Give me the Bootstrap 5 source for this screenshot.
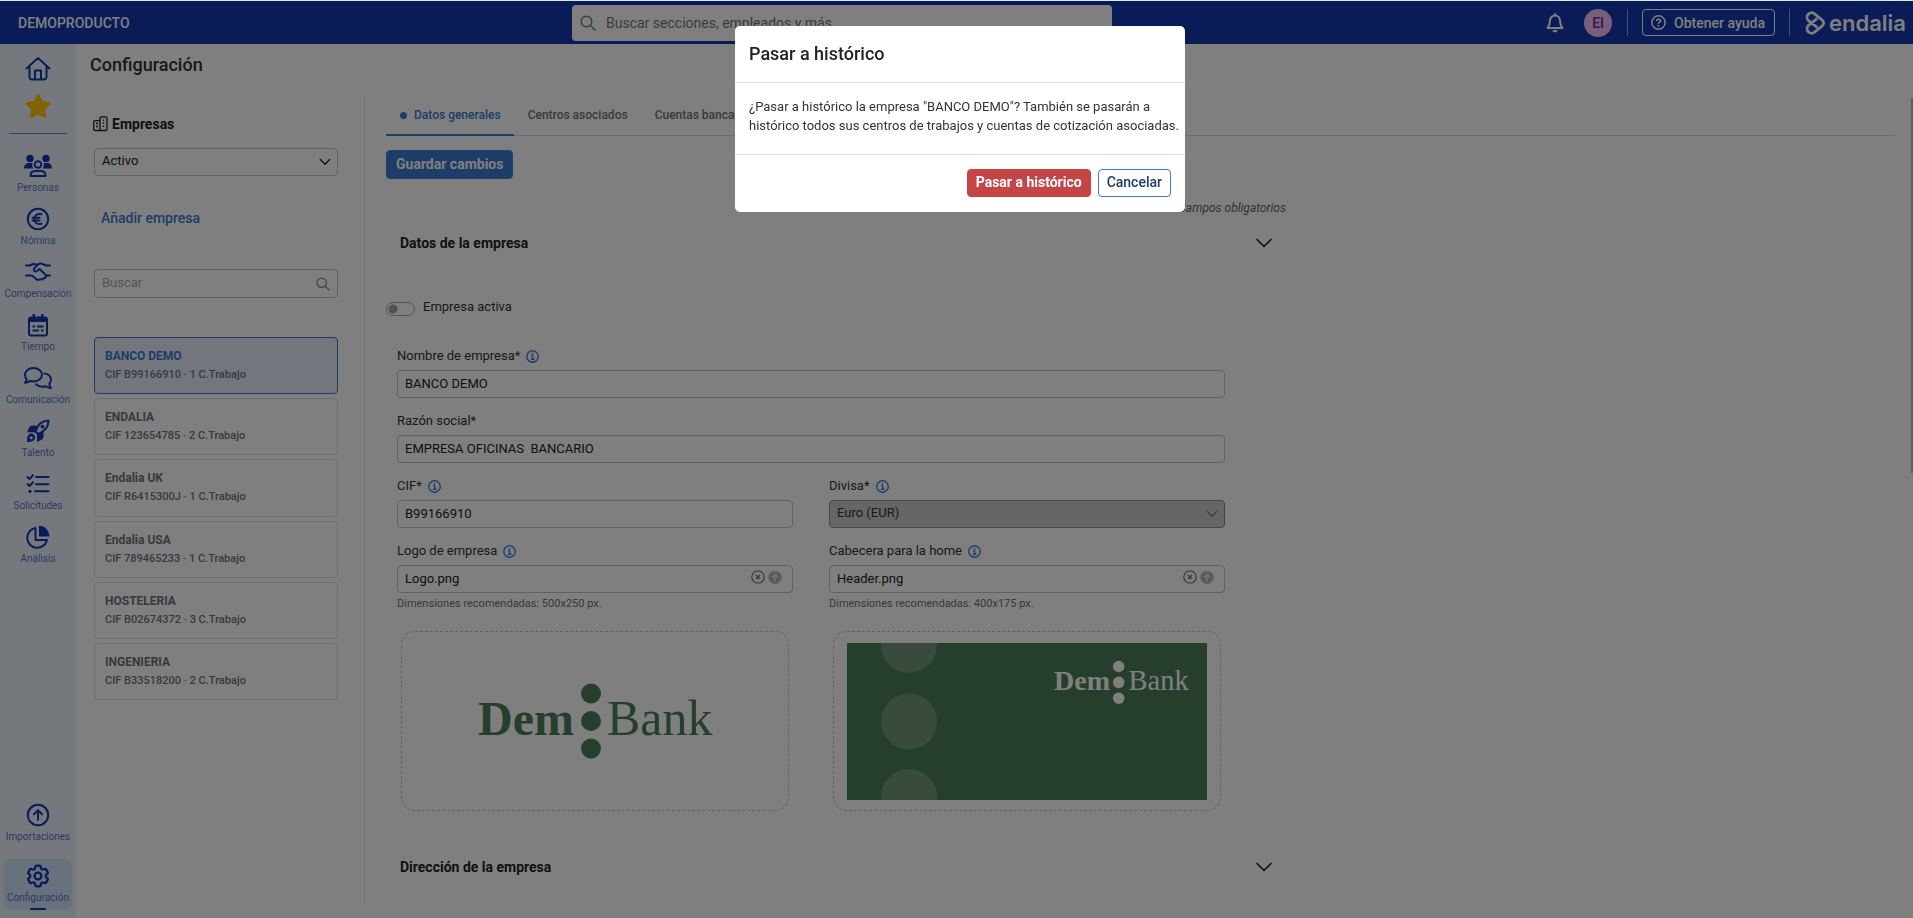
<!DOCTYPE html>
<html lang="es">
<head>
<meta charset="utf-8">
<meta name="viewport" content="width=device-width, initial-scale=1">
<title>Configuración - Empresas</title>
<link rel="stylesheet" href="https://cdn.jsdelivr.net/npm/bootstrap@5.3.0/dist/css/bootstrap.min.css">
<style>
:root{--navy:#1238b0;--blue:#3a7bd0;--ink:#333;--line:#bfc3c6;--muted:#6c757d}
body{font-family:Roboto,"Liberation Sans",sans-serif;font-size:13px;line-height:18px;color:var(--ink);border-top:1px solid #dde8e8;overflow:hidden}
svg{display:block;flex:none}
.stroke-icon{fill:none;stroke:currentColor;stroke-width:2;stroke-linecap:round;stroke-linejoin:round}
.logo-mark{fill:none;stroke:currentColor;stroke-width:2.800;stroke-linecap:round;stroke-linejoin:round}
.topbar{display:grid;grid-template-columns:554px minmax(0,540px) 1fr;height:43px;padding:0 7px 0 18px;background:var(--navy);color:#fff}
.brand-name{font-size:14px;font-weight:500}
.global-search{height:36px;background:#fff;border-radius:4px;padding-left:8px;gap:10px;color:#777}
.global-search input{border:0;outline:0;padding:0;background:none;font-size:14px;color:var(--ink);flex:1}
.global-search input::placeholder{color:#777}
.avatar{width:28px;height:28px;background:#f0c0f8;color:#78209a;font-size:14px;font-weight:500}
.sep{width:1px;height:27px;background:#8ea2dc}
.sep-user{margin:0 14px 0 15px}
.sep-logo{margin:0 15px 0 14px}
.btn-help{height:27px;padding:0 9px 0 8px;gap:8px;border:1px solid #fff;border-radius:4px;color:#fff;font-size:14px;font-weight:500;line-height:20px}
.logo-text{font-family:Inter,sans-serif;font-weight:600;font-size:22px;line-height:24px}
.rail{width:76px;background:#ebf2fc;color:var(--navy);padding:12px 4px 8px}
.rail a{color:var(--navy);text-decoration:none;font-size:10px;line-height:16px}
.rail a span{color:#5578c8}
.rail-item{height:53px;padding-top:5px;gap:2px}
.rail-item.current{height:51px;background:#d3e4f9;border-radius:7px}
.rail-item.current::after{content:"";width:16px;height:2px;background:var(--navy);border-radius:1px}
.rail hr{width:58px;margin:15px auto;border-color:#5b86d8;opacity:1}
.page-title{font-size:18px;font-weight:500;line-height:22px;margin:0;padding:10px 14px 19px}
.companies{width:289px;border-right:1px solid #ebedee;padding:19px 26px 0 17px;margin-bottom:12px}
.companies h2,.section-head{font-size:14px;font-weight:700;line-height:20px;color:#222}
.form-control,.form-select{font-size:13px;line-height:18px;height:28px;padding:3px 8px 5px 7px;border:1px solid var(--line);border-radius:4px;color:#222}
.form-select{padding-top:2px;padding-right:28px;background-image:url("data:image/svg+xml,%3Csvg xmlns='http://www.w3.org/2000/svg' viewBox='0 0 16 16'%3E%3Cpath fill='none' stroke='%23222' stroke-width='1.6' stroke-linecap='round' stroke-linejoin='round' d='M2.5 5l5.5 5.5L13.500 5'/%3E%3C/svg%3E");background-size:14px;background-position:right 5px center}
.form-select:disabled{background-color:#ccc;border-color:#8c8f92;opacity:1;color:#333;-webkit-text-fill-color:#333;background-image:url("data:image/svg+xml,%3Csvg xmlns='http://www.w3.org/2000/svg' viewBox='0 0 16 16'%3E%3Cpath fill='none' stroke='%237a7d80' stroke-width='1.6' stroke-linecap='round' stroke-linejoin='round' d='M2.5 5l5.5 5.5L13.500 5'/%3E%3C/svg%3E")}
.form-control::placeholder{color:#a9adb0}
.filter-state{margin:14px 0 0 1px;width:244px}
.add-link{font-size:14px;font-weight:500;line-height:28px;color:var(--blue);padding:0 8px;border:0;background:none;margin-top:28px}
.company-search{margin:37px 0 39px 1px}
.company-search .form-control{height:29px}
.company-list{display:grid;grid-auto-rows:1fr;gap:4px;height:363px;margin-left:1px}
.company-item{border:1px solid #dcdee0;border-radius:4px;padding:9px 10px 0;text-decoration:none;color:var(--muted);font-size:11px;font-weight:500;line-height:18px}
.company-item strong{display:block;font-size:12px;font-weight:700;line-height:19px}
.company-item.current{background:#e6eefa;border-color:var(--blue)}
.company-item.current strong{color:var(--blue)}
.detail{padding:0 16px 0 21px}
.nav-tabs{--bs-nav-tabs-border-color:#d8dadc}
.nav-tabs .nav-link{border:0;border-bottom:2px solid transparent;border-radius:0;height:41px;padding:11px 13px 10px 14px;gap:7px;font-size:12px;font-weight:500;line-height:18px;color:var(--muted)}
.nav-tabs .nav-link.active{color:var(--blue);border-bottom-color:var(--blue);background:none}
.dot{width:7px;height:7px;border-radius:50%;background:currentColor}
.btn-main{--bs-btn-color:#fff;--bs-btn-bg:#3a7bd0;--bs-btn-border-color:#4a86d4;height:29px;padding:0 9px 2px;font-size:14px;font-weight:700;line-height:20px;border-radius:4px;margin-top:14px}
.form-area{max-width:900px}
.required-note{font-size:12px;font-style:italic;color:#666;margin-top:20px}
.section-head{height:24px;padding:0 14px;border:0;background:none;line-height:24px;margin-top:14px}
.fields+.section-head{margin-top:44px}
.active-row{margin-top:43px;gap:8px;height:18px}
.active-row label{line-height:17px}
.form-check-input.toggle{width:29px;height:14px;margin:4px 0 0;border:1px solid #a4a6a8;border-radius:7px;background-image:radial-gradient(circle,#a4a4a4 4px,transparent 5px);background-size:14px 14px;background-position:-1px center;background-repeat:no-repeat}
.fields{margin-top:31px;padding:0 61px 0 11px;display:grid;grid-template-columns:1fr 1fr;gap:14px 36px}
.field-wide{grid-column:span 2}
.field-label{gap:6px;height:18px;margin-bottom:5px}
.field-label svg{color:#3a7be0}
.file-icons{position:absolute;right:11px;top:5px;gap:3px;color:#7a7f84}
.file-icons button{border:0;background:none;padding:0;color:inherit}
.hint{font-size:11px;line-height:18px;color:var(--muted);margin-top:2px}
.preview{height:180px;margin:18px 4px 0;border:1px dashed #c3c5c7;border-radius:14px}
.preview text{font-family:"Liberation Serif",serif}
.thumb{width:2px;height:375px;margin-top:54px;background:#bcbcbc}
.modal-backdrop{top:1px}
.modal{padding-left:7px}
.modal-dialog{max-width:450px;margin:26px auto 0}
.modal-content{border:0;border-radius:5px;color:var(--ink)}
.modal-header{padding:16px 14px 17px}
.modal-title{font-size:18px;font-weight:500;line-height:23px;color:#222}
.modal-body{padding:14px 3px 19px 14px;line-height:19px}
.modal-footer{padding:14px 14px 15px;gap:7px}
.modal-footer>*{margin:0}
.modal .btn{height:28px;padding:0 8px 2px;font-size:14px;line-height:20px;border-radius:4px}
.btn-archive{--bs-btn-color:#fff;--bs-btn-bg:#c54546;--bs-btn-border-color:#c54546;font-weight:700}
.btn-cancel{--bs-btn-color:#1d3b63;--bs-btn-bg:#fff;--bs-btn-border-color:#3a7bd5;font-weight:500}
</style>
</head>
<body class="vh-100 d-flex flex-column">
<svg width="0" height="0" class="position-absolute" aria-hidden="true">
  <symbol id="i-info" viewBox="0 0 16 16"><circle cx="8" cy="8" r="7.100" fill="none" stroke="currentColor" stroke-width="1.700"/><path fill="none" stroke="currentColor" stroke-width="1.600" d="M6.200 7.200h2v4M6 11.400h4.400"/><circle cx="8" cy="4.700" r="1.100" fill="currentColor"/></symbol>
  <symbol id="i-search" viewBox="0 0 16 16"><path fill="none" stroke="currentColor" stroke-width="1.400" stroke-linecap="round" d="M6.500 1.200a5.300 5.300 0 1 0 0 10.600a5.300 5.300 0 1 0 0-10.600M10.400 10.400l4.600 4.600"/></symbol>
  <symbol id="i-down" viewBox="0 0 16 10"><path fill="none" stroke="currentColor" stroke-width="1.700" stroke-linecap="round" stroke-linejoin="round" d="M1 1.500l7 7l7-7"/></symbol>
  <symbol id="i-clear" viewBox="0 0 16 16"><circle cx="8" cy="8" r="7.100" fill="none" stroke="currentColor" stroke-width="1.500"/><path stroke="currentColor" stroke-width="1.900" d="M5.700 5.700l4.600 4.600M10.300 5.700l-4.600 4.600"/></symbol>
  <symbol id="i-up" viewBox="0 0 16 16"><circle cx="8" cy="8.500" r="7.500" fill="#b4b4b4"/><path fill="none" stroke="#e8e8e8" stroke-width="1.800" d="M8 13V5M4.600 8.600L8 5.200l3.400 3.400"/></symbol>
</svg>

<header class="topbar align-items-center flex-shrink-0">
  <div class="brand-name">DEMOPRODUCTO</div>
  <label class="global-search d-flex align-items-center">
    <svg width="16" height="16"><use href="#i-search"/></svg>
    <input type="search" placeholder="Buscar secciones, empleados y más" aria-label="Buscar">
  </label>
  <div class="d-flex align-items-center justify-content-end">
    <button type="button" class="btn p-0 border-0 text-white me-3 pe-1" aria-label="Notificaciones">
      <svg width="18" height="20" viewBox="0 0 18 20"><path class="stroke-icon" d="M9 1v1.500M9 2.500a5 5 0 0 0-5 5c0 4-1 5.500-2.500 7.500h15C15 13 14 11.500 14 7.500a5 5 0 0 0-5-5z"/><path fill="currentColor" d="M6.500 17h5a2.500 2.500 0 0 1-5 0z"/></svg>
    </button>
    <div class="avatar rounded-circle d-flex align-items-center justify-content-center">EI</div>
    <div class="sep sep-user"></div>
    <button type="button" class="btn btn-help d-flex align-items-center">
      <svg width="15" height="15" viewBox="0 0 16 16"><circle cx="8" cy="8" r="7.100" fill="none" stroke="currentColor" stroke-width="1.600"/><path fill="none" stroke="currentColor" stroke-width="1.700" d="M5.900 6.500c0-2.700 4.300-2.600 4.300-.2 0 1.500-2.200 1.500-2.200 2.900"/><circle cx="8" cy="11.500" r="1.100" fill="currentColor"/></svg>
      Obtener ayuda
    </button>
    <div class="sep sep-logo"></div>
    <svg class="me-1" width="20" height="24" viewBox="0 0 20 24"><path class="logo-mark" d="M11.500 15.800L3.200 9.400A4.600 4.600 0 0 1 9.300 2.600L17 8.800A4 4 0 0 1 17 15.200L9.300 21.400A4.600 4.600 0 0 1 3.200 14.600L11.500 8.200"/></svg>
    <span class="logo-text">endalia</span>
  </div>
</header>

<div class="d-flex flex-grow-1" style="min-height:0">
  <nav class="rail d-flex flex-column flex-shrink-0">
    <a href="#" class="d-flex justify-content-center" aria-label="Inicio"><svg width="26" height="26" viewBox="0 0 26 26"><path class="stroke-icon" d="M1.500 12.500L13 2l11.500 10.500M4.500 10.500V21a2.500 2.500 0 0 0 2.500 2.500h12a2.500 2.500 0 0 0 2.500-2.500V10.500M10 23v-8.500h6V23"/></svg></a>
    <a href="#" class="d-flex justify-content-center pt-2 mt-1" aria-label="Favoritos"><svg width="26" height="24" viewBox="16 0 544 512"><path fill="#ffca00" d="M316.900 18C311.600 7 300.400 0 288.100 0s-23.400 7-28.800 18L195 150.300 51.400 171.500c-12 1.800-22 10.200-25.700 21.700s-.7 24.200 7.900 32.700L137.800 329 113.200 474.700c-2 12 3 24.200 12.900 31.300s23 8 33.800 2.300l128.300-68.500 128.300 68.500c10.800 5.700 23.900 4.900 33.800-2.300s14.900-19.300 12.900-31.300L438.500 329 542.700 225.900c8.600-8.500 11.700-21.200 7.900-32.700s-13.700-19.900-25.700-21.700L381.200 150.300 316.900 18z"/></svg></a>
    <hr>
    <a href="#" class="rail-item d-flex flex-column align-items-center"><svg width="28" height="24" viewBox="0 0 28 24"><g fill="currentColor"><circle cx="6" cy="4.500" r="3.700"/><circle cx="22" cy="4.500" r="3.700"/><path d="M0 14.500c0-3.500 2-5.500 5-5.500h3.500a6 6 0 0 0 .8 5.500zM28 14.500c0-3.500-2-5.500-5-5.500h-3.500a6 6 0 0 1-.8 5.500z"/></g><circle class="stroke-icon" cx="14" cy="10.500" r="3.300"/><path class="stroke-icon" d="M6.500 22c0-3.200 2-5 4.500-5h6c2.500 0 4.500 1.800 4.500 5z"/></svg><span>Personas</span></a>
    <a href="#" class="rail-item d-flex flex-column align-items-center"><svg width="24" height="24" viewBox="0 0 24 24"><circle class="stroke-icon" cx="12" cy="12" r="10.200"/><path class="stroke-icon" d="M15.500 7.300c-4-1.200-7 .8-7 4.700s3 5.900 7 4.700M6.500 10.800h7M6.500 13.500h7"/></svg><span>Nómina</span></a>
    <a href="#" class="rail-item d-flex flex-column align-items-center"><svg width="26" height="24" viewBox="0 0 26 24"><path class="stroke-icon" d="M1 5.500h4l3-1.500 4 .5M25 5.500h-4L17 3.800c-1.500-.5-3-.2-4 .8L9 8.500c-1 2 1.200 3.800 3 2.500l2.500-2 6.500 6.300M25 15.500h-4c.5 2-1 3-2.500 2.500-.5 1.500-2 2-3.200 1-1 1.300-2.600 1.300-3.800.2L7 15.500H1"/></svg><span>Compensación</span></a>
    <a href="#" class="rail-item d-flex flex-column align-items-center"><svg width="24" height="24" viewBox="0 0 24 24"><rect class="stroke-icon" x="3" y="4.500" width="18" height="18" rx="2"/><path fill="currentColor" d="M3 4h18v5H3zM6.500 1h2.400v4H6.500zM15.100 1h2.400v4h-2.400zM6.500 12.500H9v2H6.500zM11 12.500h6.500v2H11zM6.500 16.500H13v2H6.500zM15 16.500h2.500v2H15z"/></svg><span>Tiempo</span></a>
    <a href="#" class="rail-item d-flex flex-column align-items-center"><svg width="28" height="24" viewBox="0 0 28 24"><path class="stroke-icon" d="M9.500 2c4.700 0 8.500 2.900 8.500 6.700s-3.800 6.700-8.500 6.700c-1.200 0-2.300-.2-3.300-.5C5 15.800 3 16.700 1 16.700c1.200-1.200 1.600-2.500 1.700-3.500C1.600 12 1 10.500 1 8.700 1 4.900 4.800 2 9.500 2zM20.500 7.500c3.700.4 6.500 3 6.500 6.300 0 1.600-.6 3-1.700 4.200.1 1.200.6 2.600 1.700 4-2 0-4-.9-5.200-1.800-1 .3-2 .5-3.300.5-2.700 0-5-1-6.500-2.500"/></svg><span>Comunicación</span></a>
    <a href="#" class="rail-item d-flex flex-column align-items-center"><svg width="24" height="24" viewBox="0 0 24 24"><path class="stroke-icon" d="M9.500 12.500C11.500 5.500 15.500 2 22.500 1.600 22.500 8.500 19 12.700 11.800 15z"/><circle fill="currentColor" cx="16.500" cy="7.700" r="1.900"/><path fill="currentColor" d="M10.500 6.500H6C4.500 6.500 3.800 7.500 3.200 8.500L1 13.200h8.500zM17.500 13V18c0 1.500-1 2.200-2 2.800L11 23v-8zM1 23c0-3 .3-5.500 1.500-7 1.800-2 4-1.700 5.500-.3s1.800 3.800 0 5.500C6.500 22.600 4 23 1 23z"/><circle cx="5.200" cy="18.800" r="1.500" fill="#ebf2fc"/></svg><span>Talento</span></a>
    <a href="#" class="rail-item d-flex flex-column align-items-center"><svg width="24" height="24" viewBox="0 0 24 24"><path class="stroke-icon" d="M1.500 5l2 2L7 3.200M1.500 12l2 2L7 10.200M10 5h12.500M10 12.200h12.500M9 19.300h13.500"/><circle fill="currentColor" cx="4" cy="19.300" r="1.600"/></svg><span>Solicitudes</span></a>
    <a href="#" class="rail-item d-flex flex-column align-items-center"><svg width="24" height="24" viewBox="0 0 24 24"><path class="stroke-icon" d="M9.500 3A10 10 0 1 0 21 15H9.500z"/><path fill="currentColor" d="M13 .8A10.300 10.300 0 0 1 23.300 11.500H13z"/></svg><span>Análisis</span></a>
    <a href="#" class="rail-item mt-auto d-flex flex-column align-items-center mb-2"><svg width="24" height="24" viewBox="0 0 24 24"><circle class="stroke-icon" cx="12" cy="12" r="10.200"/><path class="stroke-icon" d="M12 16.800V7.500M8 11.200l4-4 4 4"/></svg><span>Importaciones</span></a>
    <a href="#" class="rail-item current d-flex flex-column align-items-center"><svg width="24" height="24" viewBox="1.500 1.500 21 21"><g class="stroke-icon"><path d="M9.594 3.940c.09-.542.56-.94 1.110-.94h2.593c.55 0 1.020.398 1.110.94l.213 1.281c.063.374.313.686.645.87.074.04.147.083.22.127.325.196.72.257 1.075.124l1.217-.456a1.125 1.125 0 0 1 1.370.49l1.296 2.247a1.125 1.125 0 0 1-.26 1.431l-1.003.827c-.293.241-.438.613-.43.992a7.723 7.723 0 0 1 0 .255c-.008.378.137.75.43.991l1.004.827c.424.35.534.955.26 1.430l-1.298 2.247a1.125 1.125 0 0 1-1.369.491l-1.217-.456c-.355-.133-.75-.072-1.076.124a6.470 6.470 0 0 1-.22.128c-.331.183-.581.495-.644.869l-.213 1.281c-.09.543-.56.94-1.110.94h-2.594c-.55 0-1.019-.398-1.110-.94l-.213-1.281c-.062-.374-.312-.686-.644-.87a6.520 6.520 0 0 1-.22-.127c-.325-.196-.72-.257-1.076-.124l-1.217.456a1.125 1.125 0 0 1-1.369-.49l-1.297-2.247a1.125 1.125 0 0 1 .26-1.431l1.004-.827c.292-.24.437-.613.43-.991a6.932 6.932 0 0 1 0-.255c.007-.38-.138-.751-.43-.992l-1.004-.827a1.125 1.125 0 0 1-.26-1.430l1.297-2.247a1.125 1.125 0 0 1 1.370-.491l1.216.456c.356.133.751.072 1.076-.124.072-.044.146-.086.22-.128.332-.183.582-.495.644-.869l.214-1.280Z"/><circle cx="12" cy="12" r="3"/></g></svg><span>Configuración</span></a>
  </nav>

  <main class="flex-grow-1 d-flex flex-column" style="min-width:0">
    <h1 class="page-title">Configuración</h1>
    <div class="d-flex flex-grow-1" style="min-height:0">
      <aside class="companies flex-shrink-0">
        <h2 class="d-flex align-items-center gap-1 mb-0"><svg width="15" height="16" viewBox="0 0 15 16"><path fill="none" stroke="currentColor" stroke-width="1.300" d="M7 14.500H2A1.300 1.300 0 0 1 .7 13.200V6A1.300 1.300 0 0 1 2 4.700h5zM7 2.200A1.300 1.300 0 0 1 8.300.9h4.400A1.300 1.300 0 0 1 14 2.200v11a1.300 1.300 0 0 1-1.300 1.300H7z"/><path stroke="currentColor" stroke-width="1.300" d="M3 7.500h2M3 10.500h2M10.500 3.500v1.500M10.500 6.500V8M10.500 9.500V11"/></svg>Empresas</h2>
        <select class="form-select filter-state" aria-label="Estado"><option>Activo</option></select>
        <button type="button" class="add-link d-block">Añadir empresa</button>
        <div class="company-search position-relative">
          <input type="search" class="form-control" placeholder="Buscar" aria-label="Buscar empresa">
          <svg class="position-absolute top-50 end-0 translate-middle-y me-2" width="14" height="14" color="#888"><use href="#i-search"/></svg>
        </div>
        <div class="company-list">
          <a href="#" class="company-item current"><strong>BANCO DEMO</strong>CIF B99166910 · 1 C.Trabajo</a>
          <a href="#" class="company-item"><strong>ENDALIA</strong>CIF 123654785 · 2 C.Trabajo</a>
          <a href="#" class="company-item"><strong>Endalia UK</strong>CIF R6415300J · 1 C.Trabajo</a>
          <a href="#" class="company-item"><strong>Endalia USA</strong>CIF 789465233 · 1 C.Trabajo</a>
          <a href="#" class="company-item"><strong>HOSTELERIA</strong>CIF B02674372 · 3 C.Trabajo</a>
          <a href="#" class="company-item"><strong>INGENIERIA</strong>CIF B33518200 · 2 C.Trabajo</a>
        </div>
      </aside>

      <section class="detail flex-grow-1 overflow-hidden">
        <ul class="nav nav-tabs">
          <li class="nav-item"><a class="nav-link active d-flex align-items-center" href="#"><span class="dot"></span>Datos generales</a></li>
          <li class="nav-item"><a class="nav-link" href="#">Centros asociados</a></li>
          <li class="nav-item"><a class="nav-link" href="#">Cuentas bancarias</a></li>
        </ul>
        <button type="button" class="btn btn-main d-block">Guardar cambios</button>
        <form class="form-area">
          <div class="required-note text-end">*Campos obligatorios</div>
          <button type="button" class="section-head w-100 d-flex align-items-center justify-content-between">Datos de la empresa<svg width="16" height="10"><use href="#i-down"/></svg></button>
          <div class="active-row d-flex"><input type="checkbox" role="switch" class="form-check-input toggle" id="activa"><label for="activa">Empresa activa</label></div>
          <div class="fields">
            <div class="field-wide">
              <label class="field-label d-flex align-items-center" for="nombre">Nombre de empresa*<svg width="13" height="13"><use href="#i-info"/></svg></label>
              <input class="form-control" id="nombre" value="BANCO DEMO">
            </div>
            <div class="field-wide">
              <label class="field-label d-flex align-items-center" for="razon">Razón social*</label>
              <input class="form-control" id="razon" value="EMPRESA OFICINAS  BANCARIO">
            </div>
            <div>
              <label class="field-label d-flex align-items-center" for="cif">CIF*<svg width="13" height="13"><use href="#i-info"/></svg></label>
              <input class="form-control" id="cif" value="B99166910">
            </div>
            <div>
              <label class="field-label d-flex align-items-center" for="divisa">Divisa*<svg width="13" height="13"><use href="#i-info"/></svg></label>
              <select class="form-select" id="divisa" disabled><option>Euro (EUR)</option></select>
            </div>
            <div>
              <label class="field-label d-flex align-items-center" for="logo">Logo de empresa<svg width="13" height="13"><use href="#i-info"/></svg></label>
              <div class="position-relative">
                <input class="form-control" id="logo" value="Logo.png">
                <div class="file-icons d-flex"><button type="button" aria-label="Quitar"><svg width="14" height="14"><use href="#i-clear"/></svg></button><button type="button" aria-label="Subir"><svg width="14" height="14"><use href="#i-up"/></svg></button></div>
              </div>
              <div class="hint">Dimensiones recomendadas: 500x250 px.</div>
              <div class="preview d-flex align-items-center justify-content-center">
                <svg width="236" height="76" viewBox="0 0 236 76" fill="#4c7e5a"><text x="1" y="52" font-size="48" font-weight="700">Dem</text><circle cx="114" cy="10.500" r="10"/><circle cx="114" cy="38" r="10"/><circle cx="114" cy="65.500" r="10"/><text x="130" y="52" font-size="50">Bank</text></svg>
              </div>
            </div>
            <div>
              <label class="field-label d-flex align-items-center" for="cabecera">Cabecera para la home<svg width="13" height="13"><use href="#i-info"/></svg></label>
              <div class="position-relative">
                <input class="form-control" id="cabecera" value="Header.png">
                <div class="file-icons d-flex"><button type="button" aria-label="Quitar"><svg width="14" height="14"><use href="#i-clear"/></svg></button><button type="button" aria-label="Subir"><svg width="14" height="14"><use href="#i-up"/></svg></button></div>
              </div>
              <div class="hint">Dimensiones recomendadas: 400x175 px.</div>
              <div class="preview d-flex align-items-center justify-content-center">
                <svg width="360" height="157" viewBox="0 0 360 157"><path fill="#4c7e5a" d="M0 0h360v157H0z"/><g fill="#739779"><circle cx="62" cy="2" r="28"/><circle cx="62" cy="78.500" r="28"/><circle cx="62" cy="154" r="28"/></g><g fill="#fff"><text x="207" y="47" font-size="28" font-weight="700">Dem</text><circle cx="271.700" cy="23.500" r="5.800"/><circle cx="271.700" cy="39.300" r="5.800"/><circle cx="271.700" cy="55.200" r="5.800"/><text x="281.500" y="47" font-size="28.500">Bank</text></g></svg>
              </div>
            </div>
          </div>
          <button type="button" class="section-head w-100 d-flex align-items-center justify-content-between">Dirección de la empresa<svg width="16" height="10"><use href="#i-down"/></svg></button>
        </form>
      </section>
    </div>
  </main>
  <div class="thumb flex-shrink-0" aria-hidden="true"></div>
</div>

<div class="modal show d-block" tabindex="-1" role="dialog" aria-modal="true" aria-labelledby="dlgTitle">
  <div class="modal-dialog">
    <div class="modal-content">
      <div class="modal-header"><h5 class="modal-title" id="dlgTitle">Pasar a histórico</h5></div>
      <div class="modal-body">¿Pasar a histórico la empresa "BANCO DEMO"? También se pasarán a histórico todos sus centros de trabajos y cuentas de cotización asociadas.</div>
      <div class="modal-footer">
        <button type="button" class="btn btn-archive">Pasar a histórico</button>
        <button type="button" class="btn btn-cancel">Cancelar</button>
      </div>
    </div>
  </div>
</div>
<div class="modal-backdrop show"></div>
<script src="https://cdn.jsdelivr.net/npm/bootstrap@5.3.0/dist/js/bootstrap.bundle.min.js"></script>
</body>
</html>
